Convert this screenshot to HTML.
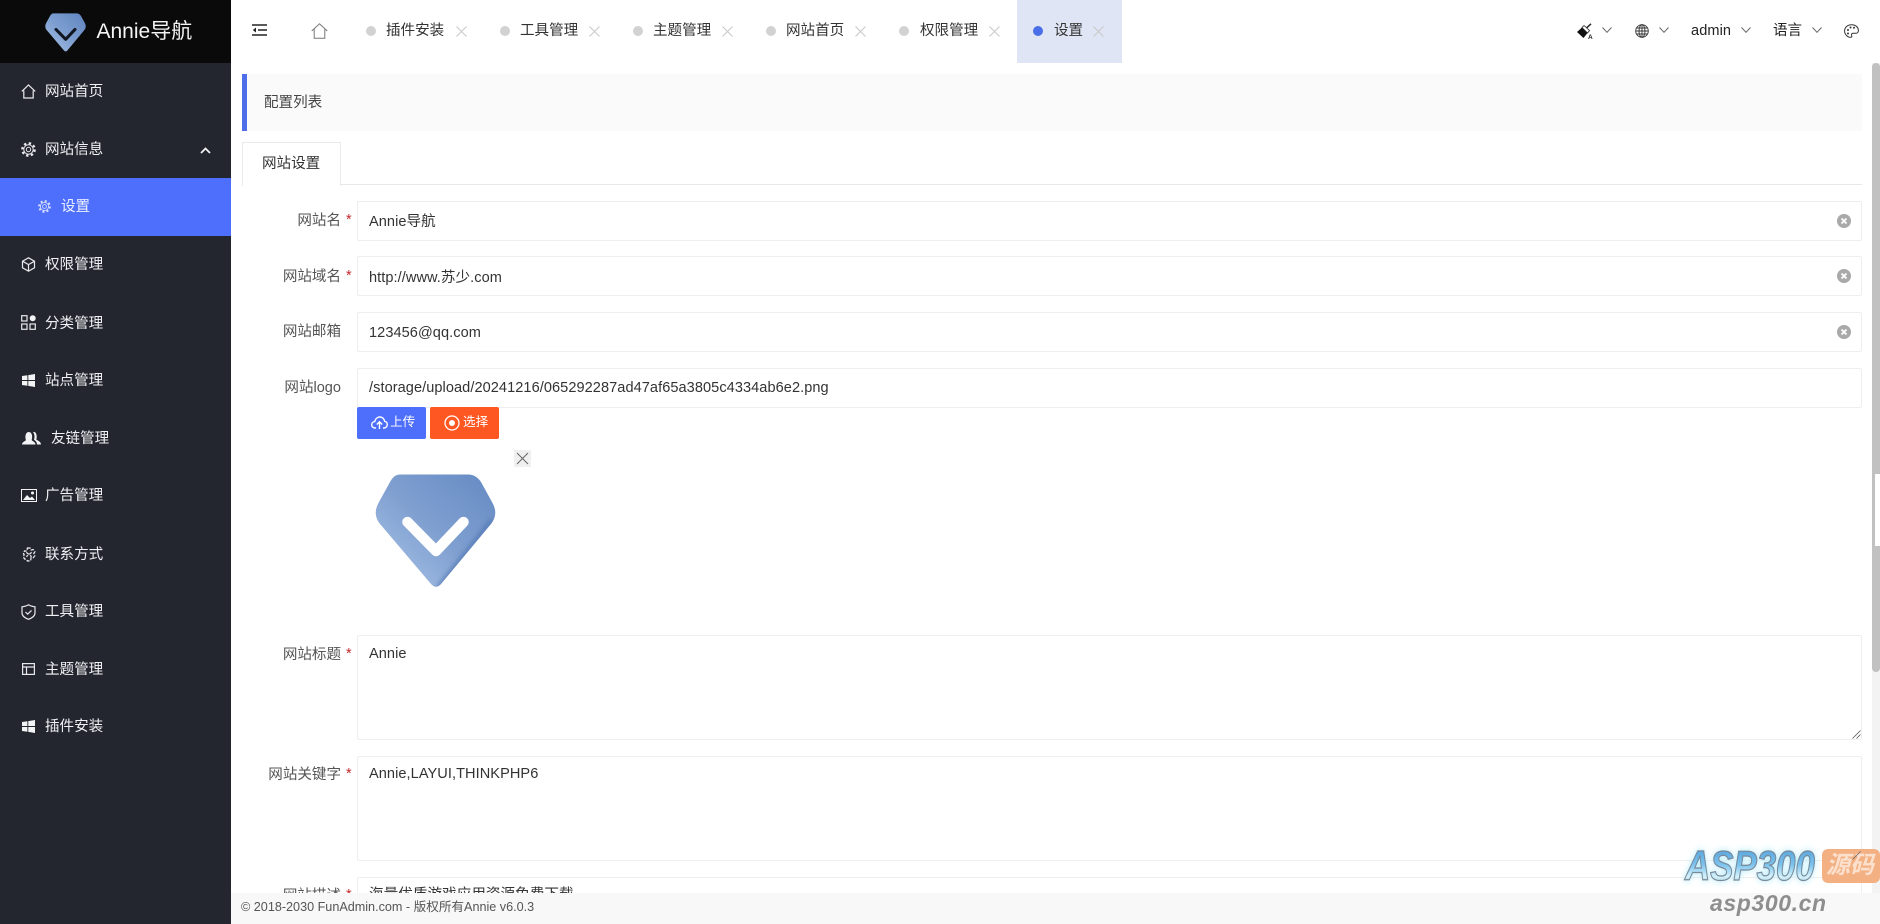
<!DOCTYPE html>
<html lang="zh"><head><meta charset="utf-8"><title>Annie导航</title>
<style>
html,body{margin:0;padding:0;width:1880px;height:924px;overflow:hidden;background:#fff}
body{position:relative;font-family:"Liberation Sans","Noto Sans CJK SC",sans-serif;font-size:14.55px;color:#333}
.a{position:absolute}
.t{position:absolute;white-space:nowrap;line-height:20px;height:20px}
.side{left:0;top:0;width:231px;height:924px;background:#23262f}
.brand{left:0;top:0;width:231px;height:63px;background:#0a0a0a}
.act{left:0;top:178px;width:231px;height:58px;background:#4d6ffb}
.m{color:#f0f1f4;left:45px}
.ic{position:absolute;fill:none;stroke:#e8e9ec;stroke-width:1.2}
.dot{position:absolute;top:26px;width:10px;height:10px;border-radius:50%;background:#d2d2d2}
.x{position:absolute;top:26px;width:11px;height:11px}
.x path{stroke:#c8c8c8;stroke-width:1;fill:none}
.tabt{top:21px;color:#333}
.chev{position:absolute;top:27px;width:10px;height:6px}
.chev path{fill:none;stroke:#666;stroke-width:1}
.inp{position:absolute;left:357px;width:1503px;background:#fff;border:1px solid #eee;border-radius:2px}
.lab{color:#555;text-align:right;right:1539px}
.req{color:#c3272b;left:346px;font-size:14.4px}
.val{left:369px;color:#333;letter-spacing:.07px}
.clr{position:absolute;left:1837px;width:14px;height:14px;border-radius:50%;background:#a9a9a9}
.clr svg{display:block}
.rh{position:absolute;left:1852px;width:9px;height:9px}
</style></head><body>

<div class="a side"></div>
<div class="a brand"></div>
<svg class="a" style="left:45px;top:13px" width="41" height="39" viewBox="375 474 121 114">
<defs><linearGradient id="g" x1="0" y1="1" x2="1" y2="0"><stop offset="0" stop-color="#a9c3e8"/><stop offset=".5" stop-color="#7c9dcf"/><stop offset="1" stop-color="#5f84bf"/></linearGradient></defs>
<path d="M400 474.500H468Q476 474.500 481 482L492 502Q499 514 491 524L441 584Q436 589.500 431 584L380 524Q372 514 379 502L390 482Q394 474.500 400 474.500Z" fill="url(#g)"/>
<path d="M407.500 522L436 551L463.500 522" fill="none" stroke="#111722" stroke-width="9" stroke-linecap="round" stroke-linejoin="round"/></svg>
<div class="t" style="left:96.500px;top:20px;height:24px;line-height:24px;font-size:21px;color:#f4f4f4">Annie导航</div>

<div class="a act"></div>
<!-- sidebar icons -->
<svg class="ic" style="left:21px;top:84px" width="15" height="15" viewBox="0 0 15 15"><path d="M.8 7.400L7.500 1l6.700 6.400M2.800 6.500V14h9.400V6.500"/></svg>
<div class="t m" style="top:82px">网站首页</div>

<svg class="a" style="left:21px;top:142px" width="15" height="15" viewBox="0 0 15 15"><g fill="none" stroke="#e8e9ec"><circle cx="7.500" cy="7.500" r="6.200" stroke-width="2.300" stroke-dasharray="2.400 2.470"/><circle cx="7.500" cy="7.500" r="4.700" stroke-width="1"/><circle cx="7.500" cy="7.500" r="2.200" stroke-width="1"/></g></svg>
<div class="t m" style="top:140px">网站信息</div>
<svg class="a" style="left:200px;top:147px" width="11" height="7" viewBox="0 0 11 7"><path d="M1 6L5.500 1.500L10 6" fill="none" stroke="#f0f0f0" stroke-width="1.800"/></svg>

<svg class="a" style="left:38px;top:200px" width="13" height="13" viewBox="0 0 15 15"><g fill="none" stroke="#d5dcff"><circle cx="7.500" cy="7.500" r="6.200" stroke-width="2.300" stroke-dasharray="2.400 2.470"/><circle cx="7.500" cy="7.500" r="4.700" stroke-width="1"/><circle cx="7.500" cy="7.500" r="2.200" stroke-width="1"/></g></svg>
<div class="t" style="left:61px;top:197px;color:#eef1ff">设置</div>

<svg class="ic" style="left:21px;top:257px" width="15" height="15" viewBox="0 0 15 15"><path d="M7.500.8l6 3.400v6.600l-6 3.400-6-3.400V4.200zM1.700 4.300l5.800 3.300 5.800-3.300M7.500 7.600v6.400"/></svg>
<div class="t m" style="top:255px">权限管理</div>

<svg class="a" style="left:21px;top:315px" width="15" height="15" viewBox="0 0 15 15"><g fill="none" stroke="#e8e9ec" stroke-width="1.200"><rect x=".7" y=".7" width="5.300" height="5.300"/><rect x=".7" y="9" width="5.300" height="5.300"/><rect x="9" y="9" width="5.300" height="5.300"/></g><circle cx="11.700" cy="3.300" r="3" fill="#f2f3f5"/></svg>
<div class="t m" style="top:314px">分类管理</div>

<svg class="a" style="left:22px;top:374px" width="13" height="13" viewBox="0 0 13 13"><path d="M0 2l5.400-.8v4.800H0zM6.300 1.100L13 0v6H6.300zM0 7h5.400v4.800L0 11zM6.300 7H13v6l-6.700-1.100z" fill="#f2f3f5"/></svg>
<div class="t m" style="top:371px">站点管理</div>

<svg class="a" style="left:22px;top:431px" width="19" height="14" viewBox="0 0 19 14"><path d="M0 13.500c0-2.500 3-3 4-4.500C3 7 3 1 6.800 1s3.800 6 2.800 8c1 1.500 3.900 2 3.900 4.500zM11 1c3.700-1 4.300 5 3.300 7.500 1 1 4.700 2 4.700 5h-4c0-3-2-4-3-4.800 1-3 .5-5.700-1-7.700z" fill="#f2f3f5"/></svg>
<div class="t m" style="left:51px;top:429px">友链管理</div>

<svg class="a" style="left:21px;top:489px" width="16" height="13" viewBox="0 0 16 13"><rect x=".5" y=".5" width="15" height="12" fill="none" stroke="#f2f3f5"/><path d="M2 11l4-5 3 3 2-1.500 3 3.500z" fill="#f2f3f5"/><circle cx="11.500" cy="4" r="1.500" fill="#f2f3f5"/></svg>
<div class="t m" style="top:486px">广告管理</div>

<svg class="ic" style="left:22px;top:547px;stroke-dasharray:3 1.500" width="14" height="15" viewBox="0 0 13 14"><path d="M5 1h3l.5 1.800 2-.4 1.500 2-1 1.600 1 2-1.500 2-2-.4L8 13H5l-.5-1.400-2-.4-1.500-2 1-2-1-1.600 1.500-2 2 .4z"/><path d="M4 5l5 4M9 5l-5 4"/></svg>
<div class="t m" style="top:545px">联系方式</div>

<svg class="ic" style="left:21px;top:604px" width="15" height="16" viewBox="0 0 15 16"><path d="M7.500.8c2 1.300 4 1.800 6.500 2v6c0 3-3 5.300-6.500 6.500C4 14.100 1 11.800 1 8.800v-6C3.500 2.600 5.500 2.100 7.500.8z"/><path d="M4.500 8l2.200 2.200 3.800-3.800"/></svg>
<div class="t m" style="top:602px">工具管理</div>

<svg class="ic" style="left:22px;top:663px" width="13" height="12" viewBox="0 0 13 12"><rect x=".6" y=".6" width="11.800" height="10.800"/><path d="M.6 4h11.800M4.500 4v7.400"/></svg>
<div class="t m" style="top:660px">主题管理</div>

<svg class="a" style="left:22px;top:720px" width="13" height="13" viewBox="0 0 13 13"><path d="M0 2l5.400-.8v4.800H0zM6.300 1.100L13 0v6H6.300zM0 7h5.400v4.800L0 11zM6.300 7H13v6l-6.700-1.100z" fill="#f2f3f5"/></svg>
<div class="t m" style="top:717px">插件安装</div>

<!-- top bar -->
<svg class="a" style="left:252px;top:24px" width="15" height="12" viewBox="0 0 15 12"><path d="M0 1h15M6 6h9M0 11h15" stroke="#222" stroke-width="1.500" fill="none"/><path d="M4 3.500L.8 6 4 8.500z" fill="#222"/></svg>
<svg class="a" style="left:311px;top:23px" width="17" height="16" viewBox="0 0 17 16"><path d="M.7 8L8.500.8 16.300 8M3.200 6.300V15.300h10.600V6.300" fill="none" stroke="#777" stroke-width="1"/></svg>

<div class="dot" style="left:366px"></div><div class="t tabt" style="left:386px">插件安装</div>
<svg class="x" style="left:456px" viewBox="0 0 11 11"><path d="M.5.500l10 10M10.500.500l-10 10"/></svg>
<div class="dot" style="left:500px"></div><div class="t tabt" style="left:520px">工具管理</div>
<svg class="x" style="left:589px" viewBox="0 0 11 11"><path d="M.5.500l10 10M10.500.500l-10 10"/></svg>
<div class="dot" style="left:633px"></div><div class="t tabt" style="left:653px">主题管理</div>
<svg class="x" style="left:722px" viewBox="0 0 11 11"><path d="M.5.500l10 10M10.500.500l-10 10"/></svg>
<div class="dot" style="left:766px"></div><div class="t tabt" style="left:786px">网站首页</div>
<svg class="x" style="left:855px" viewBox="0 0 11 11"><path d="M.5.500l10 10M10.500.500l-10 10"/></svg>
<div class="dot" style="left:899px"></div><div class="t tabt" style="left:920px">权限管理</div>
<svg class="x" style="left:989px" viewBox="0 0 11 11"><path d="M.5.500l10 10M10.500.500l-10 10"/></svg>
<div class="a" style="left:1017px;top:0;width:105px;height:63px;background:#dfe5f4"></div>
<div class="dot" style="left:1033px;background:#4a6ee8"></div><div class="t tabt" style="left:1054px">设置</div>
<svg class="x" style="left:1093px" viewBox="0 0 11 11"><path d="M.5.500l10 10M10.500.500l-10 10"/></svg>

<!-- top right -->
<svg class="a" style="left:1577px;top:23px" width="17" height="16" viewBox="0 0 17 16"><path d="M0 9L5 4.500 10.500 10 6.500 15z" fill="#111"/><path d="M5 4.500l2-2 5.500 5-2 2.500z" fill="#fff" stroke="#222" stroke-width=".8"/><path d="M9.500 5L14 .8" stroke="#333" stroke-width="1.600" fill="none"/><text x="11" y="15.800" font-size="6.500" font-weight="700" font-family="Liberation Sans" fill="#222">A</text></svg>
<svg class="chev" style="left:1602px" viewBox="0 0 10 6"><path d="M.5.500L5 5.300 9.500.500"/></svg>
<svg class="a" style="left:1635px;top:24px" width="14" height="14" viewBox="0 0 14 14"><g fill="none" stroke="#333" stroke-width=".9"><circle cx="7" cy="7" r="6.300"/><ellipse cx="7" cy="7" rx="3" ry="6.300"/><path d="M.7 7h12.600M1.500 4h11M1.500 10h11M7 .7v12.600"/></g></svg>
<svg class="chev" style="left:1659px" viewBox="0 0 10 6"><path d="M.5.500L5 5.300 9.500.500"/></svg>
<div class="t" style="left:1691px;top:21px;color:#222;letter-spacing:.1px">admin</div>
<svg class="chev" style="left:1741px" viewBox="0 0 10 6"><path d="M.5.500L5 5.300 9.500.500"/></svg>
<div class="t" style="left:1773px;top:21px;color:#222">语言</div>
<svg class="chev" style="left:1812px" viewBox="0 0 10 6"><path d="M.5.500L5 5.300 9.500.500"/></svg>
<svg class="a" style="left:1844px;top:24px" width="15" height="14" viewBox="0 0 15 14"><path d="M7.500.7C3.500.7.600 3.500.600 7c0 3.500 3 6.300 6 6.300 1.500 0 1.500-1 1-2-.5-1.200.3-2 1.500-2h2.400c1.700 0 2.900-1 2.900-2.600C14.400 3 11.500.7 7.500.7z" fill="none" stroke="#333"/><circle cx="4" cy="6" r="1" fill="#333"/><circle cx="6.500" cy="3.500" r="1" fill="#333"/><circle cx="10" cy="3.700" r="1" fill="#333"/><circle cx="4" cy="9.500" r="1" fill="#333"/></svg>

<!-- scrollbar -->
<div class="a" style="left:1872px;top:63px;width:8px;height:830px;background:#f3f3f3"></div>
<div class="a" style="left:1872px;top:63px;width:8px;height:609px;background:#c1c1c1;border-radius:4px"></div>
<div class="a" style="left:1875px;top:474px;width:5px;height:72px;background:#fff"></div>

<!-- panel -->
<div class="a" style="left:242px;top:74px;width:1620px;height:57px;background:#fafafa"></div>
<div class="a" style="left:242px;top:74px;width:5px;height:57px;background:#4d6ee8"></div>
<div class="t" style="left:264px;top:93px;color:#444">配置列表</div>

<div class="a" style="left:242px;top:184px;width:1620px;height:1px;background:#e8e8e8"></div>
<div class="a" style="left:242px;top:142px;width:97px;height:43px;background:#fff;border:1px solid #eaeaea;border-bottom:0;box-sizing:content-box"></div>
<div class="t" style="left:262px;top:154px;color:#333">网站设置</div>

<!-- form -->
<div class="inp" style="top:201px;height:38px"></div>
<div class="t lab" style="top:211px">网站名</div><div class="t req" style="top:210px">*</div>
<div class="t val" style="top:212px">Annie导航</div>
<div class="clr" style="top:214px"><svg width="14" height="14" viewBox="0 0 14 14"><path d="M4.500 4.500l5 5M9.500 4.500l-5 5" stroke="#fff" stroke-width="1.800"/></svg></div>

<div class="inp" style="top:256px;height:38px"></div>
<div class="t lab" style="top:267px">网站域名</div><div class="t req" style="top:266px">*</div>
<div class="t val" style="top:268px">http://www.苏少.com</div>
<div class="clr" style="top:269px"><svg width="14" height="14" viewBox="0 0 14 14"><path d="M4.500 4.500l5 5M9.500 4.500l-5 5" stroke="#fff" stroke-width="1.800"/></svg></div>

<div class="inp" style="top:312px;height:38px"></div>
<div class="t lab" style="top:322px">网站邮箱</div>
<div class="t val" style="top:323px">123456@qq.com</div>
<div class="clr" style="top:325px"><svg width="14" height="14" viewBox="0 0 14 14"><path d="M4.500 4.500l5 5M9.500 4.500l-5 5" stroke="#fff" stroke-width="1.800"/></svg></div>

<div class="inp" style="top:368px;height:38px"></div>
<div class="t lab" style="top:378px">网站logo</div>
<div class="t val" style="top:378px">/storage/upload/20241216/065292287ad47af65a3805c4334ab6e2.png</div>

<div class="a" style="left:357px;top:407px;width:69px;height:32px;background:#4d6ffb;border-radius:2px"></div>
<svg class="a" style="left:371px;top:416px" width="17" height="13" viewBox="0 0 17 13"><path d="M5 12H4C2 12 .7 10.500.7 8.700c0-1.800 1.300-3 3-3.100C4.300 3 6.200 1 8.800 1c2.600 0 4.500 2 4.800 4.300 1.600.2 2.700 1.500 2.700 3.200 0 2-1.500 3.500-3.300 3.500H12" fill="none" stroke="#fff" stroke-width="1.400"/><path d="M8.500 13V6M5.800 8.500l2.700-2.700 2.700 2.700" fill="none" stroke="#fff" stroke-width="1.400"/></svg>
<div class="t" style="left:390px;top:412px;color:#fff;font-size:12.600px">上传</div>
<div class="a" style="left:430px;top:407px;width:69px;height:32px;background:#ff5722;border-radius:2px"></div>
<svg class="a" style="left:444px;top:415px" width="16" height="16" viewBox="0 0 16 16"><circle cx="8" cy="8" r="7" fill="none" stroke="#fff" stroke-width="1.300"/><circle cx="8" cy="8" r="3" fill="#fff"/></svg>
<div class="t" style="left:463px;top:412px;color:#fff;font-size:12.600px">选择</div>

<div class="a" style="left:514px;top:450px;width:17px;height:17px;background:#f0f0f0"></div>
<svg class="a" style="left:514px;top:450px" width="17" height="17" viewBox="0 0 17 17"><path d="M3 3l11 11M14 3L3 14" stroke="#666" stroke-width="1" fill="none"/></svg>

<svg class="a" style="left:375px;top:474px" width="121" height="116" viewBox="375 474 121 116">
<defs><linearGradient id="h" x1="0" y1="1" x2="1" y2="0"><stop offset="0" stop-color="#adc6ea"/><stop offset=".5" stop-color="#7f9fd0"/><stop offset="1" stop-color="#658ac3"/></linearGradient>
<clipPath id="cl"><path d="M400 474.500H468Q476 474.500 481 482L492 502Q499 514 491 524L441 584Q436 589.500 431 584L380 524Q372 514 379 502L390 482Q394 474.500 400 474.500Z"/></clipPath>
<filter id="bl"><feGaussianBlur stdDeviation="2"/></filter></defs>
<path d="M400 474.500H468Q476 474.500 481 482L492 502Q499 514 491 524L441 584Q436 589.500 431 584L380 524Q372 514 379 502L390 482Q394 474.500 400 474.500Z" fill="url(#h)"/>
<g clip-path="url(#cl)"><path d="M492 520L438 588" fill="none" stroke="#4f74b0" stroke-width="4" filter="url(#bl)" opacity=".8"/></g>
<path d="M407.500 522L436 551L463.500 522" fill="none" stroke="#fff" stroke-width="10.500" stroke-linecap="round" stroke-linejoin="round"/></svg>

<div class="inp" style="top:635px;height:103px"></div>
<div class="t lab" style="top:645px">网站标题</div><div class="t req" style="top:644px">*</div>
<div class="t val" style="top:644px">Annie</div>
<svg class="rh" style="top:730px" viewBox="0 0 9 9"><path d="M.5 8.500l8-8M4.500 8.500l4-4" stroke="#555" stroke-width=".8" fill="none"/></svg>

<div class="inp" style="top:756px;height:103px"></div>
<div class="t lab" style="top:765px">网站关键字</div><div class="t req" style="top:764px">*</div>
<div class="t val" style="top:764px">Annie,LAYUI,THINKPHP6</div>

<div class="inp" style="top:877px;height:30px;border-bottom:0"></div>
<div class="t lab" style="top:886px">网站描述</div><div class="t req" style="top:885px">*</div>
<div class="t val" style="top:885px">海量优质游戏应用资源免费下载</div>

<!-- footer -->
<div class="a" style="left:231px;top:893px;width:1649px;height:31px;background:#f8f8f8"></div>
<div class="t" style="left:241px;top:897px;color:#555;font-size:12.620px">© 2018-2030 FunAdmin.com - 版权所有Annie v6.0.3</div>

<!-- watermark -->
<div class="t" style="left:1685px;top:849px;height:36px;line-height:36px;font-size:35px;font-weight:700;font-style:italic;color:transparent;background:linear-gradient(180deg,#4f9fdb 0%,#7cc3ee 45%,#d4f2fb 72%,#8fb9d0 100%);-webkit-background-clip:text;background-clip:text;-webkit-text-stroke:1px #7a8a99;filter:drop-shadow(0 0 3px #b5ecfb);transform:scaleY(1.2);letter-spacing:-.1px">ASP300</div>
<div class="a" style="left:1822px;top:849px;width:58px;height:34px;background:#f3b083;border-radius:6px"></div>
<div class="t" style="left:1826px;top:851px;height:30px;line-height:30px;font-size:24px;font-weight:700;font-style:italic;color:#fbe0cd">源码</div>
<div class="t" style="left:1710px;top:889px;height:28px;line-height:28px;font-size:23px;font-weight:700;font-style:italic;color:#8e8e8e;letter-spacing:.6px">asp300.cn</div>
<svg class="rh" style="top:851px" viewBox="0 0 9 9"><path d="M.5 8.500l8-8" stroke="#666" stroke-width=".8" fill="none"/></svg>
</body></html>
